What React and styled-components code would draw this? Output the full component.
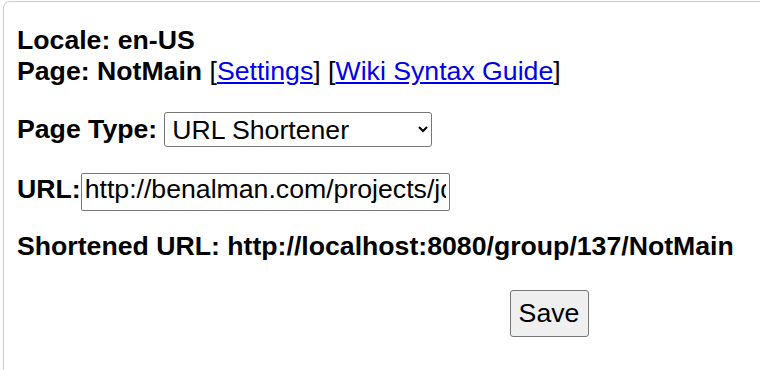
import React from "react";
import styled, { createGlobalStyle } from "styled-components";

const GlobalStyle = createGlobalStyle`
  html, body {
    margin: 0;
    padding: 0;
    background: #ffffff;
    overflow: hidden;
  }
  body {
    font-family: "Liberation Sans", Arial, sans-serif;
    color: #000000;
  }
`;

const Viewport = styled.div`
  width: 760px;
  height: 370px;
  overflow: hidden;
  padding: 1px 0 0 3px;
  box-sizing: border-box;
`;

const Card = styled.form`
  width: 1092px;
  min-height: 420px;
  box-sizing: border-box;
  border: 1px solid #cccccc;
  border-radius: 7px;
  padding: 23px 13px;
  font-size: 26.67px;
  line-height: 31px;
`;

const Info = styled.div`
  display: flex;
  flex-direction: column;
`;

const Line = styled.div`
  white-space: nowrap;
`;

const Strong = styled.span`
  font-weight: bold;
`;

const Link = styled.a`
  color: #0000ee;
  text-decoration: underline;
`;

const Row = styled.div`
  display: flex;
  align-items: ${(p) => p.$align || "center"};
  margin-top: ${(p) => p.$top}px;
  white-space: nowrap;
`;

const Label = styled.label`
  font-weight: bold;
  margin-right: ${(p) => p.$gap || 0}px;
`;

const Select = styled.select`
  font-family: "Liberation Sans", Arial, sans-serif;
  font-size: 26.67px;
  width: 268px;
  height: 35px;
  box-sizing: border-box;
  border: 1px solid #767676;
  border-radius: 3px;
  background: #ffffff;
  color: #000000;
  padding: 0 2px 0 3px;
  margin: 0;
`;

const Input = styled.input`
  font-family: "Liberation Sans", Arial, sans-serif;
  font-size: 26.67px;
  width: 369px;
  height: 38px;
  box-sizing: border-box;
  border: 1px solid #767676;
  border-radius: 2px;
  padding: 0 3px 6px 3px;
  margin: 0;
  color: #000000;
  background: #ffffff;
`;

const Result = styled.div`
  font-weight: bold;
  margin-top: 20px;
  white-space: nowrap;
`;

const Actions = styled.div`
  display: flex;
  justify-content: center;
  margin-top: 28px;
`;

const SaveButton = styled.button`
  font-family: "Liberation Sans", Arial, sans-serif;
  font-size: 26.67px;
  line-height: 31px;
  width: 79px;
  height: 47px;
  box-sizing: border-box;
  padding: 0;
  border: 1px solid #767676;
  border-radius: 3px;
  background: #efefef;
  color: #000000;
`;

export default function App() {
  return (
    <>
      <GlobalStyle />
      <Viewport>
        <Card onSubmit={(e) => e.preventDefault()}>
          <Info>
            <Line>
              <Strong>Locale: en-US</Strong>
            </Line>
            <Line>
              <Strong>Page: NotMain</Strong> [<Link href="#">Settings</Link>] [
              <Link href="#">Wiki Syntax Guide</Link>]
            </Line>
          </Info>
          <Row $top={25}>
            <Label $gap={7}>Page Type:</Label>
            <Select defaultValue="url">
              <option value="wiki">Wiki Page</option>
              <option value="url">URL Shortener</option>
            </Select>
          </Row>
          <Row $top={26} $align="baseline">
            <Label>URL:</Label>
            <Input
              type="text"
              defaultValue="http://benalman.com/projects/jquery-hashchange-plugin/"
            />
          </Row>
          <Result>Shortened URL: http://localhost:8080/group/137/NotMain</Result>
          <Actions>
            <SaveButton type="submit">Save</SaveButton>
          </Actions>
        </Card>
      </Viewport>
    </>
  );
}
